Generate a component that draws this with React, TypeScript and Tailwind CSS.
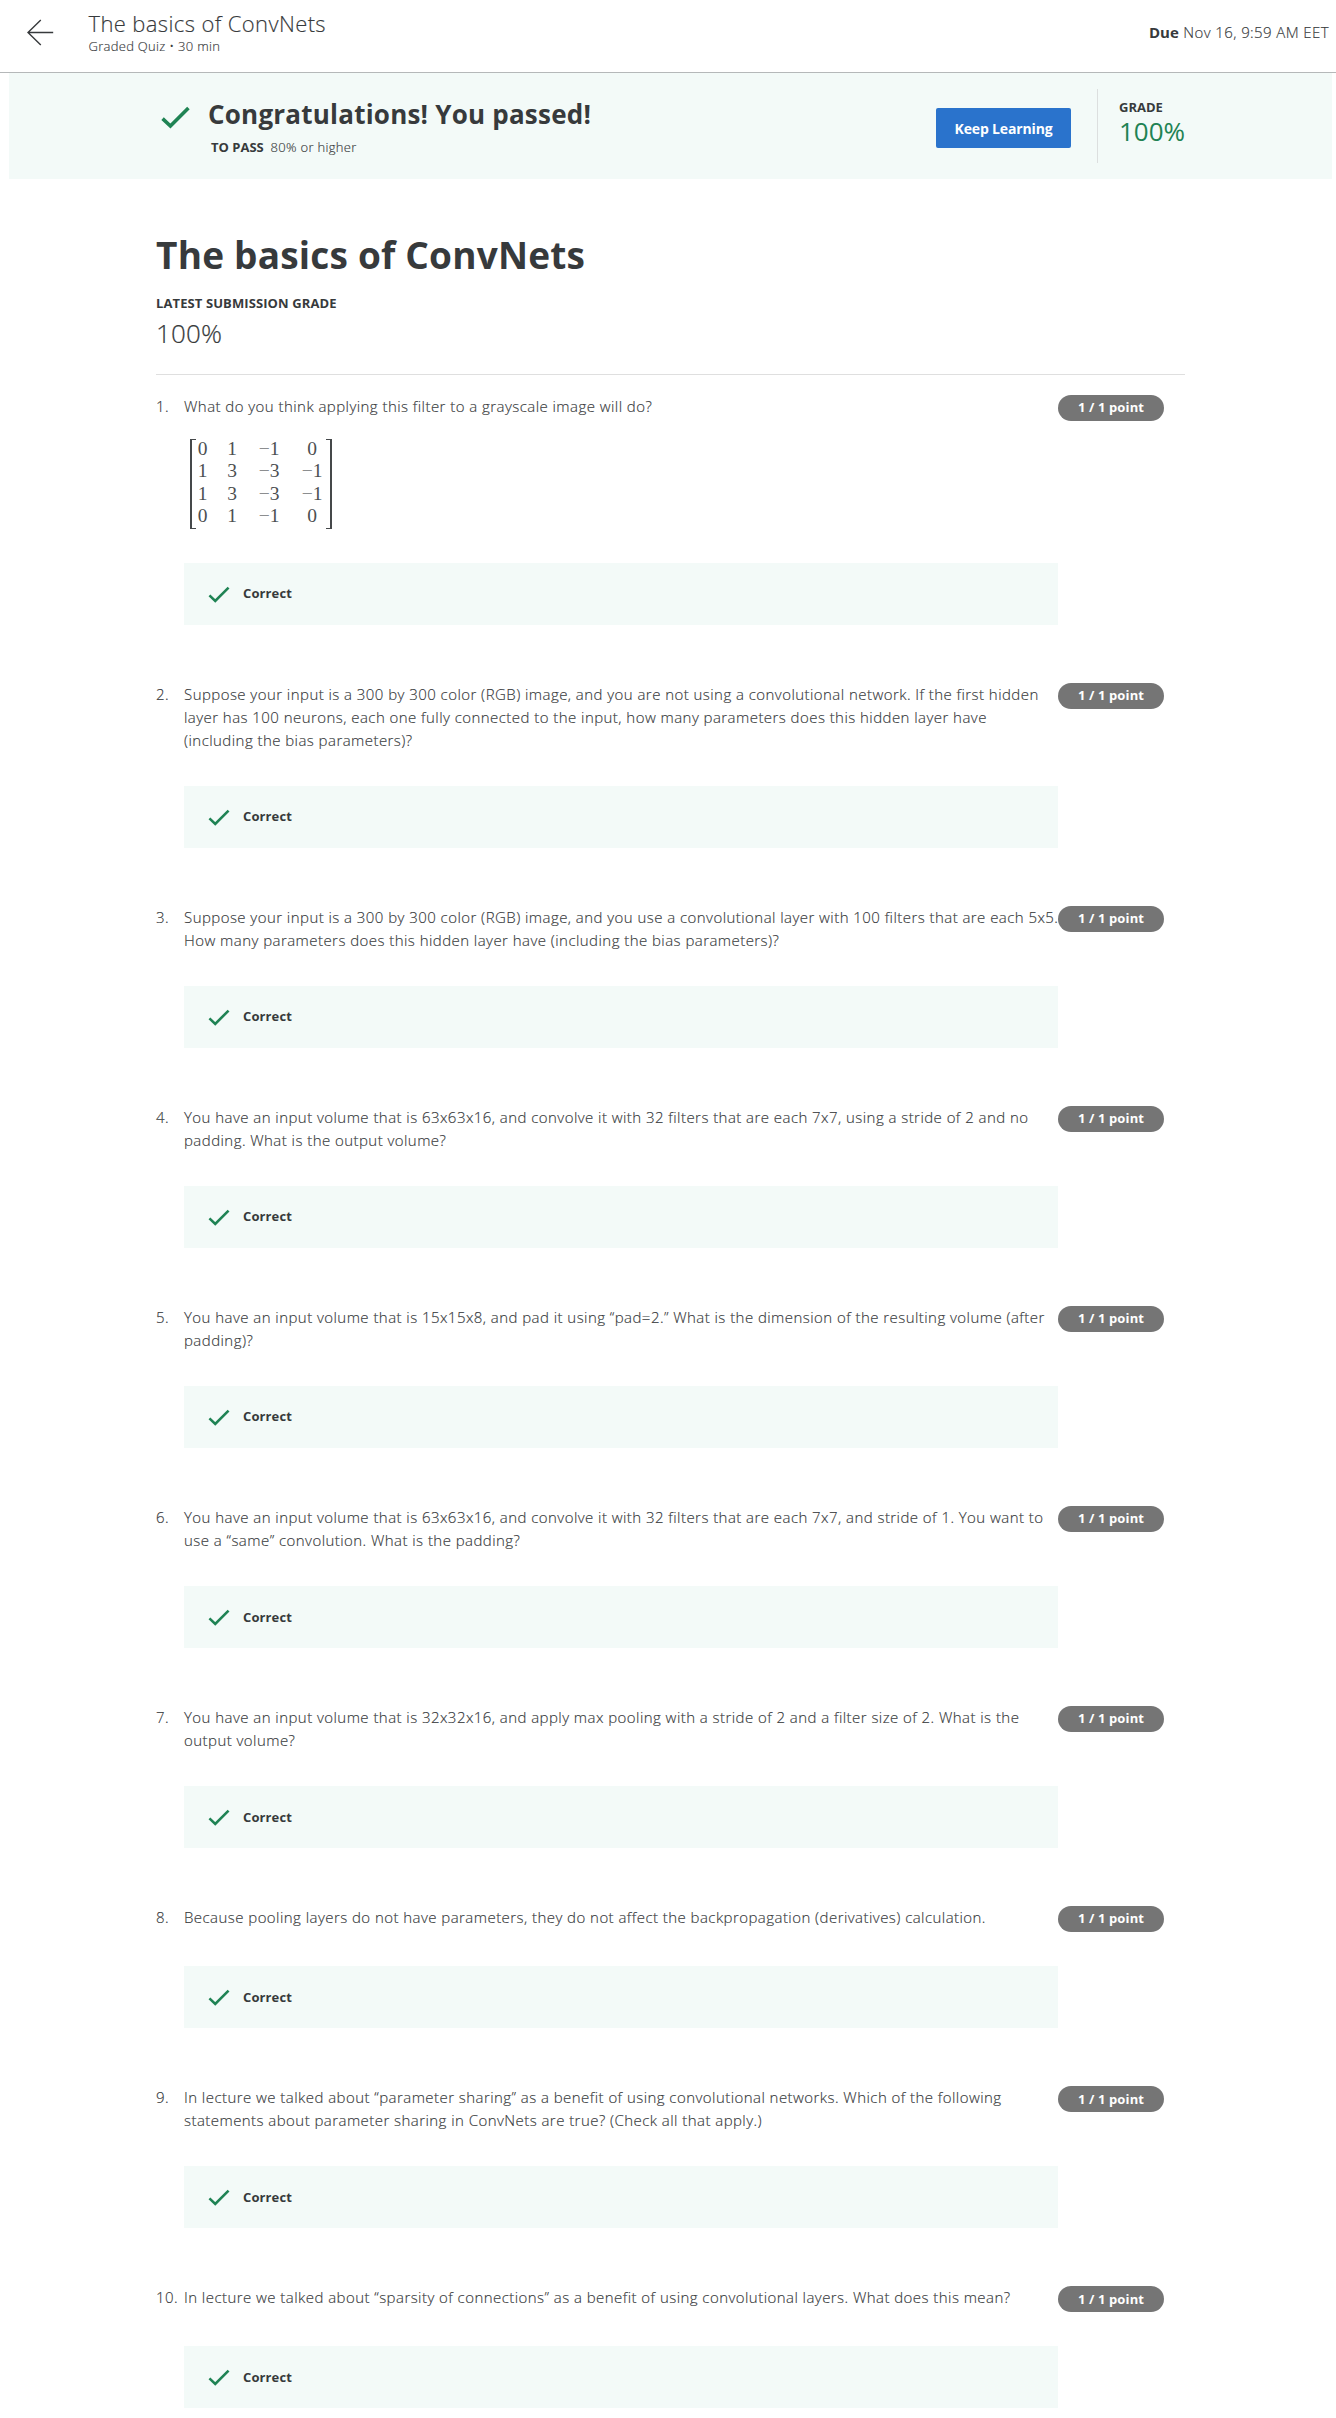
type Question = { lines: string[]; matrix?: string[][] };

const questions: Question[] = [
  {
    lines: ['What do you think applying this filter to a grayscale image will do?'],
    matrix: [
      ['0', '1', '−1', '0'],
      ['1', '3', '−3', '−1'],
      ['1', '3', '−3', '−1'],
      ['0', '1', '−1', '0'],
    ],
  },
  {
    lines: [
      'Suppose your input is a 300 by 300 color (RGB) image, and you are not using a convolutional network. If the first hidden',
      'layer has 100 neurons, each one fully connected to the input, how many parameters does this hidden layer have',
      '(including the bias parameters)?',
    ],
  },
  {
    lines: [
      'Suppose your input is a 300 by 300 color (RGB) image, and you use a convolutional layer with 100 filters that are each 5x5.',
      'How many parameters does this hidden layer have (including the bias parameters)?',
    ],
  },
  {
    lines: [
      'You have an input volume that is 63x63x16, and convolve it with 32 filters that are each 7x7, using a stride of 2 and no',
      'padding. What is the output volume?',
    ],
  },
  {
    lines: [
      'You have an input volume that is 15x15x8, and pad it using “pad=2.” What is the dimension of the resulting volume (after',
      'padding)?',
    ],
  },
  {
    lines: [
      'You have an input volume that is 63x63x16, and convolve it with 32 filters that are each 7x7, and stride of 1. You want to',
      'use a “same” convolution. What is the padding?',
    ],
  },
  {
    lines: [
      'You have an input volume that is 32x32x16, and apply max pooling with a stride of 2 and a filter size of 2. What is the',
      'output volume?',
    ],
  },
  {
    lines: [
      'Because pooling layers do not have parameters, they do not affect the backpropagation (derivatives) calculation.',
    ],
  },
  {
    lines: [
      'In lecture we talked about “parameter sharing” as a benefit of using convolutional networks. Which of the following',
      'statements about parameter sharing in ConvNets are true? (Check all that apply.)',
    ],
  },
  {
    lines: [
      'In lecture we talked about “sparsity of connections” as a benefit of using convolutional layers. What does this mean?',
    ],
  },
];

function Check({ className }: { className: string }) {
  return (
    <svg viewBox="0 0 30 24" fill="none" stroke="#1f8354" strokeWidth="3.7" className={className}>
      <path d="M1.5 13.2 L9.7 21 L28.5 2.2" />
    </svg>
  );
}

function Matrix({ rows }: { rows: string[][] }) {
  return (
    <div className="mt-[21px] ml-[6px] flex h-[90px] w-[142px] font-['Liberation_Serif',serif] text-[19.5px] font-normal tracking-normal text-[#4c4f51] [-webkit-text-stroke:0]">
      <div className="w-[6px] shrink-0 border-y-[1.5px] border-l-2 border-[#45484a]" />
      <div className="-mr-[15px] grid w-[145px] shrink-0 grid-cols-[13px_46px_28px_58px] content-start">
        {rows.map((row, r) =>
          row.map((cell, c) => (
            <span key={`${r}-${c}`} className="h-[22.3px] text-center leading-[20px] whitespace-nowrap">
              {cell.startsWith('−') && <span className="text-[#8c8e90]">−</span>}
              {cell.replace('−', '')}
            </span>
          )),
        )}
      </div>
      <div className="w-[6px] shrink-0 border-y-[1.5px] border-r-2 border-[#45484a]" />
    </div>
  );
}

function QuestionRow({ question, index }: { question: Question; index: number }) {
  return (
    <li className="flex items-start pb-[57.95px]">
      <span className="w-7 shrink-0 text-[15px] leading-[23px] font-light tracking-[0.4px] whitespace-nowrap [-webkit-text-stroke:0.15px]">
        {index}.
      </span>
      <div className="w-[874px] shrink-0">
        <div className="min-h-[26px] text-[15px] leading-[23px] font-light tracking-[0.445px] whitespace-nowrap [-webkit-text-stroke:0.15px]">
          {question.lines.map((line) => (
            <p key={line}>{line}</p>
          ))}
          {question.matrix && <Matrix rows={question.matrix} />}
        </div>
        <div className="mt-[34.1px] flex h-[62px] items-center bg-[#f3faf8] pl-6">
          <Check className="h-[17px] w-[22px]" />
          <span className="ml-[13px] text-[13px] font-bold tracking-[0.12px]">Correct</span>
        </div>
      </div>
      <span className="flex h-[26px] w-[106px] shrink-0 items-center justify-center rounded-full bg-[#757575] text-[13px] font-bold tracking-[0.12px] text-white">
        1 / 1 point
      </span>
    </li>
  );
}

export default function App() {
  return (
    <div className="h-[2418px] overflow-hidden bg-white font-['Open_Sans',sans-serif] text-[#373a3c]">
      <header className="flex h-[73px] items-start border-b border-[#b5b8b9]">
        <svg viewBox="0 0 27 27" fill="none" stroke="#373a3c" strokeWidth="1.4" className="mt-[19px] ml-[27px] h-[27px] w-[27px]">
          <path d="M26.2 13.5 H1 M13.8 1 L1 13.5 L13.8 26" />
        </svg>
        <div className="mt-[9px] ml-[34.5px] [-webkit-text-stroke:0.15px]">
          <h2 className="text-[22px] leading-[28px] font-light tracking-[0.38px]">The basics of ConvNets</h2>
          <p className="text-[13px] leading-[18px] font-light tracking-[0.29px]">Graded Quiz • 30 min</p>
        </div>
        <p className="mt-[22px] mr-[7px] ml-auto text-[15px] leading-5 font-light tracking-[0.4px] [-webkit-text-stroke:0.15px]">
          <span className="font-bold tracking-[0.1px] [-webkit-text-stroke:0]">Due</span> Nov 16, 9:59 AM EET
        </p>
      </header>

      <section className="mr-1 ml-[9px] flex h-[106px] items-start bg-[#f3faf8] pl-[152px]">
        <Check className="mt-[33px] h-[23px] w-[29px]" />
        <div className="mt-[23px] ml-[18px] w-[728px]">
          <h3 className="text-[26px] leading-9 font-bold tracking-[0.22px]">Congratulations! You passed!</h3>
          <p className="mt-[6px] ml-[3px] text-[13px] leading-[18px] font-light tracking-[0.33px] [-webkit-text-stroke:0.15px]">
            <span className="mr-[3px] font-bold tracking-normal [-webkit-text-stroke:0]">TO PASS</span> 80% or higher
          </p>
        </div>
        <button className="mt-[35px] h-10 w-[135px] rounded-[2px] bg-[#2a73cc] text-[14px] font-bold tracking-[-0.15px] text-white">
          Keep Learning
        </button>
        <div className="mt-4 ml-[26px] h-[74px] border-l border-[#dcdfdf] pt-[9px] pl-[21px]">
          <p className="text-[13px] leading-[18px] font-bold">GRADE</p>
          <p className="text-[26px] leading-[30px] text-[#1f8354]">100%</p>
        </div>
      </section>

      <main className="ml-[156px] w-[1029px] pt-[51px]">
        <h1 className="text-[37px] leading-[50px] font-bold tracking-[0.2px]">The basics of ConvNets</h1>
        <p className="mt-[14px] text-[13px] leading-[18px] font-bold tracking-[0.1px]">LATEST SUBMISSION GRADE</p>
        <p className="mt-[3px] text-[26px] leading-9 font-light tracking-[0.2px] [-webkit-text-stroke:0.2px]">100%</p>
        <ol className="mt-[23px] border-t border-[#dfdfdf] pt-5">
          {questions.map((q, i) => (
            <QuestionRow key={i} question={q} index={i + 1} />
          ))}
        </ol>
      </main>
    </div>
  );
}
